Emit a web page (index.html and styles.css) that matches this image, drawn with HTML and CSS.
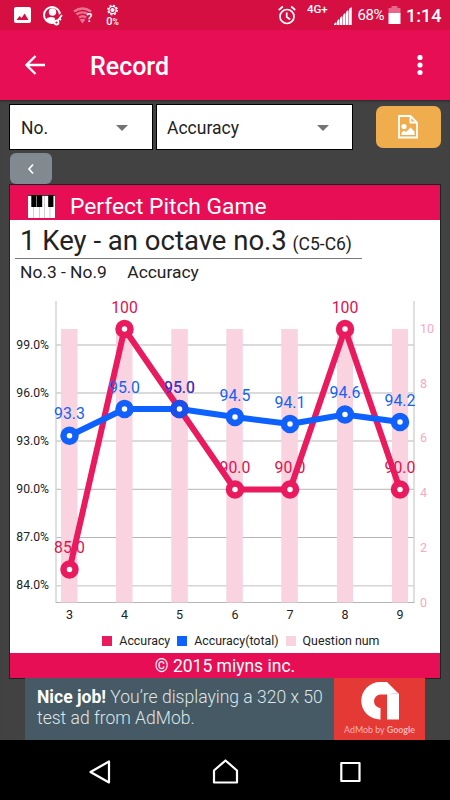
FILE: index.html
```
<!DOCTYPE html>
<html lang="en">
<head>
    <meta charset="UTF-8">
    <meta name="viewport" content="width=device-width, initial-scale=1.0">
    <title>Record</title>
    <link rel="stylesheet" href="styles.css">
</head>
<body>
    <div class="status-bar">
        <svg class="status-left" width="125" height="30" viewBox="0 0 125 30">
            <!-- picture -->
            <path fill="#fff" fill-rule="evenodd" d="M16 7h13q2 0 2 2v12q0 2-2 2H16q-2 0-2-2V9q0-2 2-2zM16.500 20h12l-3.900-6.500-3 4.500-2-2z"/>
            <!-- account key -->
            <circle cx="52" cy="15" r="8" fill="none" stroke="#fff" stroke-width="2"/>
            <circle cx="52.500" cy="12" r="3.700" fill="#fff"/>
            <path d="M45 20q4-5 10-2l-1 5q-5 1-9-3z" fill="#fff"/>
            <path d="M57 21l5-6M59 18l2 1.500" fill="none" stroke="#d50f42" stroke-width="4.500"/>
            <circle cx="56.500" cy="22.500" r="2" fill="#d50f42" stroke="#fff" stroke-width="1.800"/>
            <path d="M57.500 21l4.500-6M59 18.500l2 1.500" fill="none" stroke="#fff" stroke-width="1.800"/>
            <!-- wifi -->
            <g fill="none" stroke="#e7738f" stroke-width="2.400">
                <path d="M74 11.500q8.500-6 17 0M76.500 14.500q6-4.200 12 0M79 17.500q3.500-2.500 7 0"/>
            </g>
            <path d="M79.500 19.500q3-1.500 6 0l-3 4z" fill="#e7738f"/>
            <text class="wifi-mark" x="86.500" y="21.500">?</text>
            <!-- weather -->
            <circle cx="112.500" cy="10" r="4.600" fill="none" stroke="#fff" stroke-width="1.600" stroke-dasharray="1.900 1.710"/>
            <circle cx="112.500" cy="10" r="3.600" fill="none" stroke="#fff" stroke-width="1.200"/>
            <circle cx="112.500" cy="10" r="2.100" fill="#fff"/>
            <text class="rain" x="106.300" y="25">0<tspan class="pct">%</tspan></text>
        </svg>
        <svg class="alarm" width="18" height="20" viewBox="0 0 18 20">
            <g fill="none" stroke="#fff" stroke-width="1.700">
                <circle cx="9" cy="11.500" r="7"/>
                <path d="M8.700 7.500v4.500l3.500 2.500M.8 5l4-3.500M17.200 5l-4-3.500"/>
            </g>
        </svg>
        <span class="network">4G+</span>
        <svg class="signal" width="18" height="18" viewBox="0 0 18 18">
            <path fill="#fff" d="M0 18v-1l2-2v3zM3 18v-4l2-2v6zM6 18v-7l2-2v9zM9 18V8l2-2v12zM12 18V5l2-2v15zM15 18V2l2.500-2v18z"/>
            <path fill="#fff" opacity=".5" d="M0 18L18 0v18z"/>
        </svg>
        <span class="charge">68%</span>
        <svg class="battery" width="13" height="18" viewBox="0 0 13 18">
            <path fill="#e7678a" d="M3.500 0h6v2H12.500v6H.5V2h3z"/>
            <path fill="#fff" d="M.5 7h12v11H.5z"/>
        </svg>
        <span class="clock">1:14</span>
    </div>

    <header class="toolbar">
        <svg width="20" height="20" viewBox="0 0 20 20">
            <path d="M20 10H1.500M10.500 1L1.500 10l9 9" fill="none" stroke="#fff" stroke-width="2.300"/>
        </svg>
        <h1>Record</h1>
        <svg class="more" width="6" height="20" viewBox="0 0 6 20">
            <g fill="#fff">
                <circle cx="3" cy="2.500" r="2.600"/>
                <circle cx="3" cy="10" r="2.600"/>
                <circle cx="3" cy="17.500" r="2.600"/>
            </g>
        </svg>
    </header>

    <main>
        <div class="filters">
            <div class="select select-no">No.<i class="arrow"></i></div>
            <div class="select select-type">Accuracy<i class="arrow"></i></div>
            <button class="export">
                <svg width="20" height="24" viewBox="0 0 20 24">
                    <path d="M1 1h11.500L19 7.500V22.500H1z" fill="none" stroke="#fff" stroke-width="1.800"/>
                    <path d="M12.500 1v6.500H19" fill="none" stroke="#fff" stroke-width="1.800"/>
                    <circle cx="6" cy="11.500" r="2.600" fill="#fff"/>
                    <path d="M3.500 20v-2.500l2.500-2 2 1.500 4.500-4.500 4 4V20z" fill="#fff"/>
                </svg>
            </button>
        </div>
        <button class="prev">
            <svg width="8" height="12" viewBox="0 0 8 12">
                <path d="M6 1.500L2 6l4 4.500" fill="none" stroke="#fff" stroke-width="1.700"/>
            </svg>
        </button>

        <section class="card">
            <div class="card-header">
                <svg width="27" height="23" viewBox="0 0 27 23">
                    <path fill="#fff" d="M0 0h27v23H0z"/>
                    <path d="M5.500 0v23M11.500 0v23M16.500 0v23M22 0v23" stroke="#bbb" stroke-width=".7"/>
                    <path d="M0 0h27v.8H0zM3.300 0h5.200v12H3.300zM9 0h5.200v12H9zM20.200 0h5.200v12h-5.200z"/>
                </svg>
                <span>Perfect Pitch Game</span>
            </div>
            <h2>1 Key - an octave no.3 <small>(C5-C6)</small></h2>
            <div class="range"><span>No.3 - No.9</span><span>Accuracy</span></div>

            <svg class="chart" width="430" height="338" viewBox="10 290 430 338">
                <g class="grid">
                    <path d="M56 345H414M56 393H414M56 441H414M56 489.300H414M56 537.500H414"/>
                    <path class="light" d="M56 585.700H414M56 301V603M414 301V603"/>
                    <path d="M56 602.500H414"/>
                </g>
                <g class="bars">
                    <rect x="61" y="329" width="16.500" height="273.500"/>
                    <rect x="116" y="329" width="16.500" height="273.500"/>
                    <rect x="171.300" y="329" width="16.500" height="273.500"/>
                    <rect x="226.300" y="329" width="16.500" height="273.500"/>
                    <rect x="281.300" y="329" width="16.500" height="273.500"/>
                    <rect x="337" y="329" width="16" height="273.500"/>
                    <rect x="392" y="329" width="16" height="273.500"/>
                </g>
                <g class="accuracy-values">
                    <text x="69.500" y="553">85.0</text>
                    <text x="124.500" y="312.500">100</text>
                    <text x="179.500" y="392.500">95.0</text>
                    <text x="235" y="473">90.0</text>
                    <text x="290" y="473">90.0</text>
                    <text x="345" y="312.500">100</text>
                    <text x="400" y="473">90.0</text>
                </g>
                <polyline class="accuracy-line" points="69.500,569.500 124.500,329 179.500,409 235,489.500 290,489.500 345,329 400,489.500"/>
                <g class="accuracy-dots">
                    <circle cx="69.500" cy="569.500" r="6"/>
                    <circle cx="124.500" cy="329" r="6"/>
                    <circle cx="179.500" cy="409" r="6"/>
                    <circle cx="235" cy="489.500" r="6"/>
                    <circle cx="290" cy="489.500" r="6"/>
                    <circle cx="345" cy="329" r="6"/>
                    <circle cx="400" cy="489.500" r="6"/>
                </g>
                <polyline class="total-line" points="69.500,435.700 124.500,409 179.500,409 235,417 290,424 345,414.500 400,422"/>
                <g class="total-dots">
                    <circle cx="69.500" cy="435.700" r="6"/>
                    <circle cx="124.500" cy="409" r="6"/>
                    <circle class="overlap" cx="179.500" cy="409" r="6"/>
                    <circle cx="235" cy="417" r="6"/>
                    <circle cx="290" cy="424" r="6"/>
                    <circle cx="345" cy="414.500" r="6"/>
                    <circle cx="400" cy="422" r="6"/>
                </g>
                <g class="total-values">
                    <text x="69.500" y="419">93.3</text>
                    <text x="124.500" y="392.500">95.0</text>
                    <text class="overlap" x="179.500" y="392.500">95.0</text>
                    <text x="235" y="400.500">94.5</text>
                    <text x="290" y="407.500">94.1</text>
                    <text x="345" y="398">94.6</text>
                    <text x="400" y="405.500">94.2</text>
                </g>
                <g class="left-axis">
                    <text x="49" y="349">99.0%</text>
                    <text x="49" y="397">96.0%</text>
                    <text x="49" y="445">93.0%</text>
                    <text x="49" y="493.300">90.0%</text>
                    <text x="49" y="541">87.0%</text>
                    <text x="49" y="589.300">84.0%</text>
                </g>
                <g class="right-axis">
                    <text x="420" y="332.500">10</text>
                    <text x="420" y="387.500">8</text>
                    <text x="420" y="442">6</text>
                    <text x="420" y="497">4</text>
                    <text x="420" y="552">2</text>
                    <text x="420" y="607">0</text>
                </g>
                <g class="x-axis">
                    <text x="69.500" y="619.300">3</text>
                    <text x="124.500" y="619.300">4</text>
                    <text x="179.500" y="619.300">5</text>
                    <text x="235" y="619.300">6</text>
                    <text x="290" y="619.300">7</text>
                    <text x="345" y="619.300">8</text>
                    <text x="400" y="619.300">9</text>
                </g>
            </svg>

            <div class="legend">
                <span><i class="swatch accuracy"></i>Accuracy</span>
                <span><i class="swatch total"></i>Accuracy(total)</span>
                <span><i class="swatch questions"></i>Question num</span>
            </div>
            <div class="copyright">© 2015 miyns inc.</div>
        </section>

        <div class="ad">
            <p><b>Nice job!</b> You’re displaying a 320 x 50<br>test ad from AdMob.</p>
            <div class="admob">
                <svg width="38" height="38" viewBox="0 0 38 38">
                    <path fill="#fff" d="M26 0H19a18.700 18.700 0 0 0 0 37.500h.5V26H19a6.800 6.800 0 0 1 0-13.500h7v25H38V12z"/>
                    <path fill="#ddd" d="M26 12.300h12L36.500 10.500z"/>
                </svg>
                <div class="admob-name">AdMob by <b>Google</b></div>
            </div>
        </div>
    </main>

    <nav class="nav-bar">
        <svg width="450" height="60" viewBox="0 740 450 60">
            <g fill="none" stroke="#fff" stroke-width="2.200" stroke-linejoin="round">
                <path d="M90.500 772L109 761.500V782.500z"/>
                <path d="M214 782.500V770.500L225.500 760.500L237 770.500V782.500z"/>
                <path d="M341.300 763H359.500V781H341.300z"/>
            </g>
        </svg>
    </nav>
</body>
</html>
```
FILE: styles.css
```
* {
    box-sizing: border-box;
    margin: 0;
    padding: 0;
}

body {
    width: 450px;
    height: 800px;
    overflow: hidden;
    display: flex;
    flex-direction: column;
    font-family: Roboto, sans-serif;
    background: #424242;
    color: #222;
}

svg {
    display: block;
    flex-shrink: 0;
}

button {
    display: flex;
    align-items: center;
    justify-content: center;
    border: none;
}

/* status bar */
.status-bar {
    display: flex;
    height: 30px;
    background: #d50f42;
    color: #fff;
}

.wifi-mark {
    font-size: 12px;
    font-weight: 500;
    fill: #fff;
}

.rain {
    font-size: 11px;
    font-weight: 500;
    fill: #fff;
}

.rain .pct {
    font-size: 8.5px;
}

.alarm {
    margin: 5px 0 0 153px;
}

.network {
    width: 22px;
    margin: 3px 0 0 11px;
    font-size: 11.5px;
    line-height: 13px;
    font-weight: 500;
}

.signal {
    margin: 7px 0 0 5px;
}

.charge {
    width: 28px;
    margin: 6px 0 0 5.5px;
    font-size: 15px;
    line-height: 19px;
    letter-spacing: -0.4px;
}

.battery {
    margin: 6px 0 0 2.5px;
}

.clock {
    margin: 4px 0 0 5px;
    font-size: 18px;
    line-height: 23px;
    font-weight: 500;
}

/* toolbar */
.toolbar {
    display: flex;
    align-items: center;
    height: 70px;
    padding: 0 27px 0 25px;
    background: #e80e56;
    color: #fff;
}

.toolbar h1 {
    margin: 3px auto 0 45px;
    font-size: 25px;
    line-height: 30px;
    font-weight: 500;
}

/* content */
main {
    height: 640px;
    box-shadow: inset 0 3px 3px -2px rgba(0, 0, 0, 0.4);
}

.filters {
    display: flex;
    height: 53px;
    padding: 4px 9px 0;
}

.select {
    display: flex;
    align-items: center;
    justify-content: space-between;
    height: 46px;
    padding-top: 1px;
    background: #fff;
    border: 1px solid #000;
    font-size: 17.5px;
}

.select-no {
    width: 144px;
    padding-left: 11px;
    padding-right: 24px;
}

.select-type {
    width: 197px;
    margin-left: 3px;
    padding-left: 10px;
    padding-right: 23px;
}

.arrow {
    border: 6px solid transparent;
    border-top-color: #737373;
    border-bottom: none;
}

.export {
    width: 65px;
    height: 42px;
    margin: 2px 0 0 22.5px;
    border-radius: 7px;
    background: #f0ad4e;
}

.prev {
    width: 42px;
    height: 31px;
    margin-left: 10px;
    border-radius: 6px;
    background: #818a91;
}

.card {
    display: flex;
    flex-direction: column;
    width: 430px;
    height: 493px;
    margin: 1px 0 0 10px;
    background: #fff;
    box-shadow: 0 0 0 1px #1b2524;
}

.card-header {
    display: flex;
    height: 35px;
    padding-left: 18px;
    background: #e80e56;
    color: #fff;
}

.card-header svg {
    margin-top: 10px;
}

.card-header span {
    margin-left: 15px;
    font-size: 22.8px;
    line-height: 44px;
}

.card h2 {
    width: 347px;
    height: 39px;
    margin-left: 5px;
    padding-left: 5px;
    border-bottom: 1px solid #777;
    font-size: 27.5px;
    line-height: 42px;
    font-weight: 400;
    white-space: nowrap;
}

.card h2 small {
    margin-left: -1px;
    font-size: 17.5px;
}

.range {
    display: flex;
    gap: 20.5px;
    height: 31px;
    padding: 3px 0 0 10px;
    font-size: 17.4px;
    line-height: 20px;
}

/* chart */
.grid path {
    fill: none;
    stroke: #b5b5b5;
}

.grid .light {
    stroke: #d5d5d5;
    stroke-width: 1.5;
}

.bars {
    fill: #f9d3df;
}

.accuracy-line,
.total-line {
    fill: none;
    stroke-width: 6;
}

.accuracy-line {
    stroke: #e91a5e;
}

.total-line {
    stroke: #0d61ff;
}

.accuracy-dots,
.total-dots {
    fill: #fff;
    stroke-width: 6.5;
}

.accuracy-dots {
    stroke: #e91a5e;
}

.total-dots {
    stroke: #1260fa;
}

.total-dots .overlap {
    stroke: #1a4fea;
}

.accuracy-values,
.total-values {
    font-size: 15.8px;
    text-anchor: middle;
}

.accuracy-values {
    fill: #e0124f;
}

.total-values {
    fill: #1263f5;
}

.total-values .overlap {
    fill: #1b3fdc;
}

.left-axis {
    font-size: 12.2px;
    text-anchor: end;
    fill: #222;
}

.right-axis {
    font-size: 12.5px;
    fill: #f7a9c3;
}

.x-axis {
    font-size: 12.5px;
    text-anchor: middle;
    fill: #222;
}

.legend {
    display: flex;
    gap: 7px;
    height: 25px;
    padding: 4px 0 0 92.3px;
    font-size: 12.4px;
    line-height: 17px;
    white-space: nowrap;
}

.legend span {
    display: flex;
    align-items: center;
    height: 17px;
}

.swatch {
    width: 10px;
    height: 10px;
    margin-right: 7px;
}

.swatch.accuracy {
    background: #e91a5e;
}

.swatch.total {
    background: #0d61ff;
}

.swatch.questions {
    background: #f9d3df;
}

.copyright {
    height: 25px;
    background: #e80e56;
    color: #fff;
    font-size: 17.5px;
    line-height: 26px;
    text-align: center;
}

/* ad banner */
.ad {
    display: flex;
    justify-content: space-between;
    width: 400px;
    height: 62px;
    margin-left: 25px;
    background: #455a64;
    color: #dfe5e8;
}

.ad p {
    padding: 9px 0 0 12px;
    font-size: 17.55px;
    line-height: 21px;
    font-weight: 300;
    white-space: nowrap;
}

.ad p b {
    font-weight: 700;
    color: #fff;
}

.admob {
    display: flex;
    flex-direction: column;
    align-items: center;
    width: 91px;
    padding-top: 4px;
    background: #e53935;
}

.admob-name {
    margin-top: 4px;
    font: 8.9px/12px Lato, sans-serif;
    color: #f6b5b3;
    white-space: nowrap;
}

.admob-name b {
    font-weight: 700;
}

.nav-bar {
    height: 60px;
    background: #000;
}
```
